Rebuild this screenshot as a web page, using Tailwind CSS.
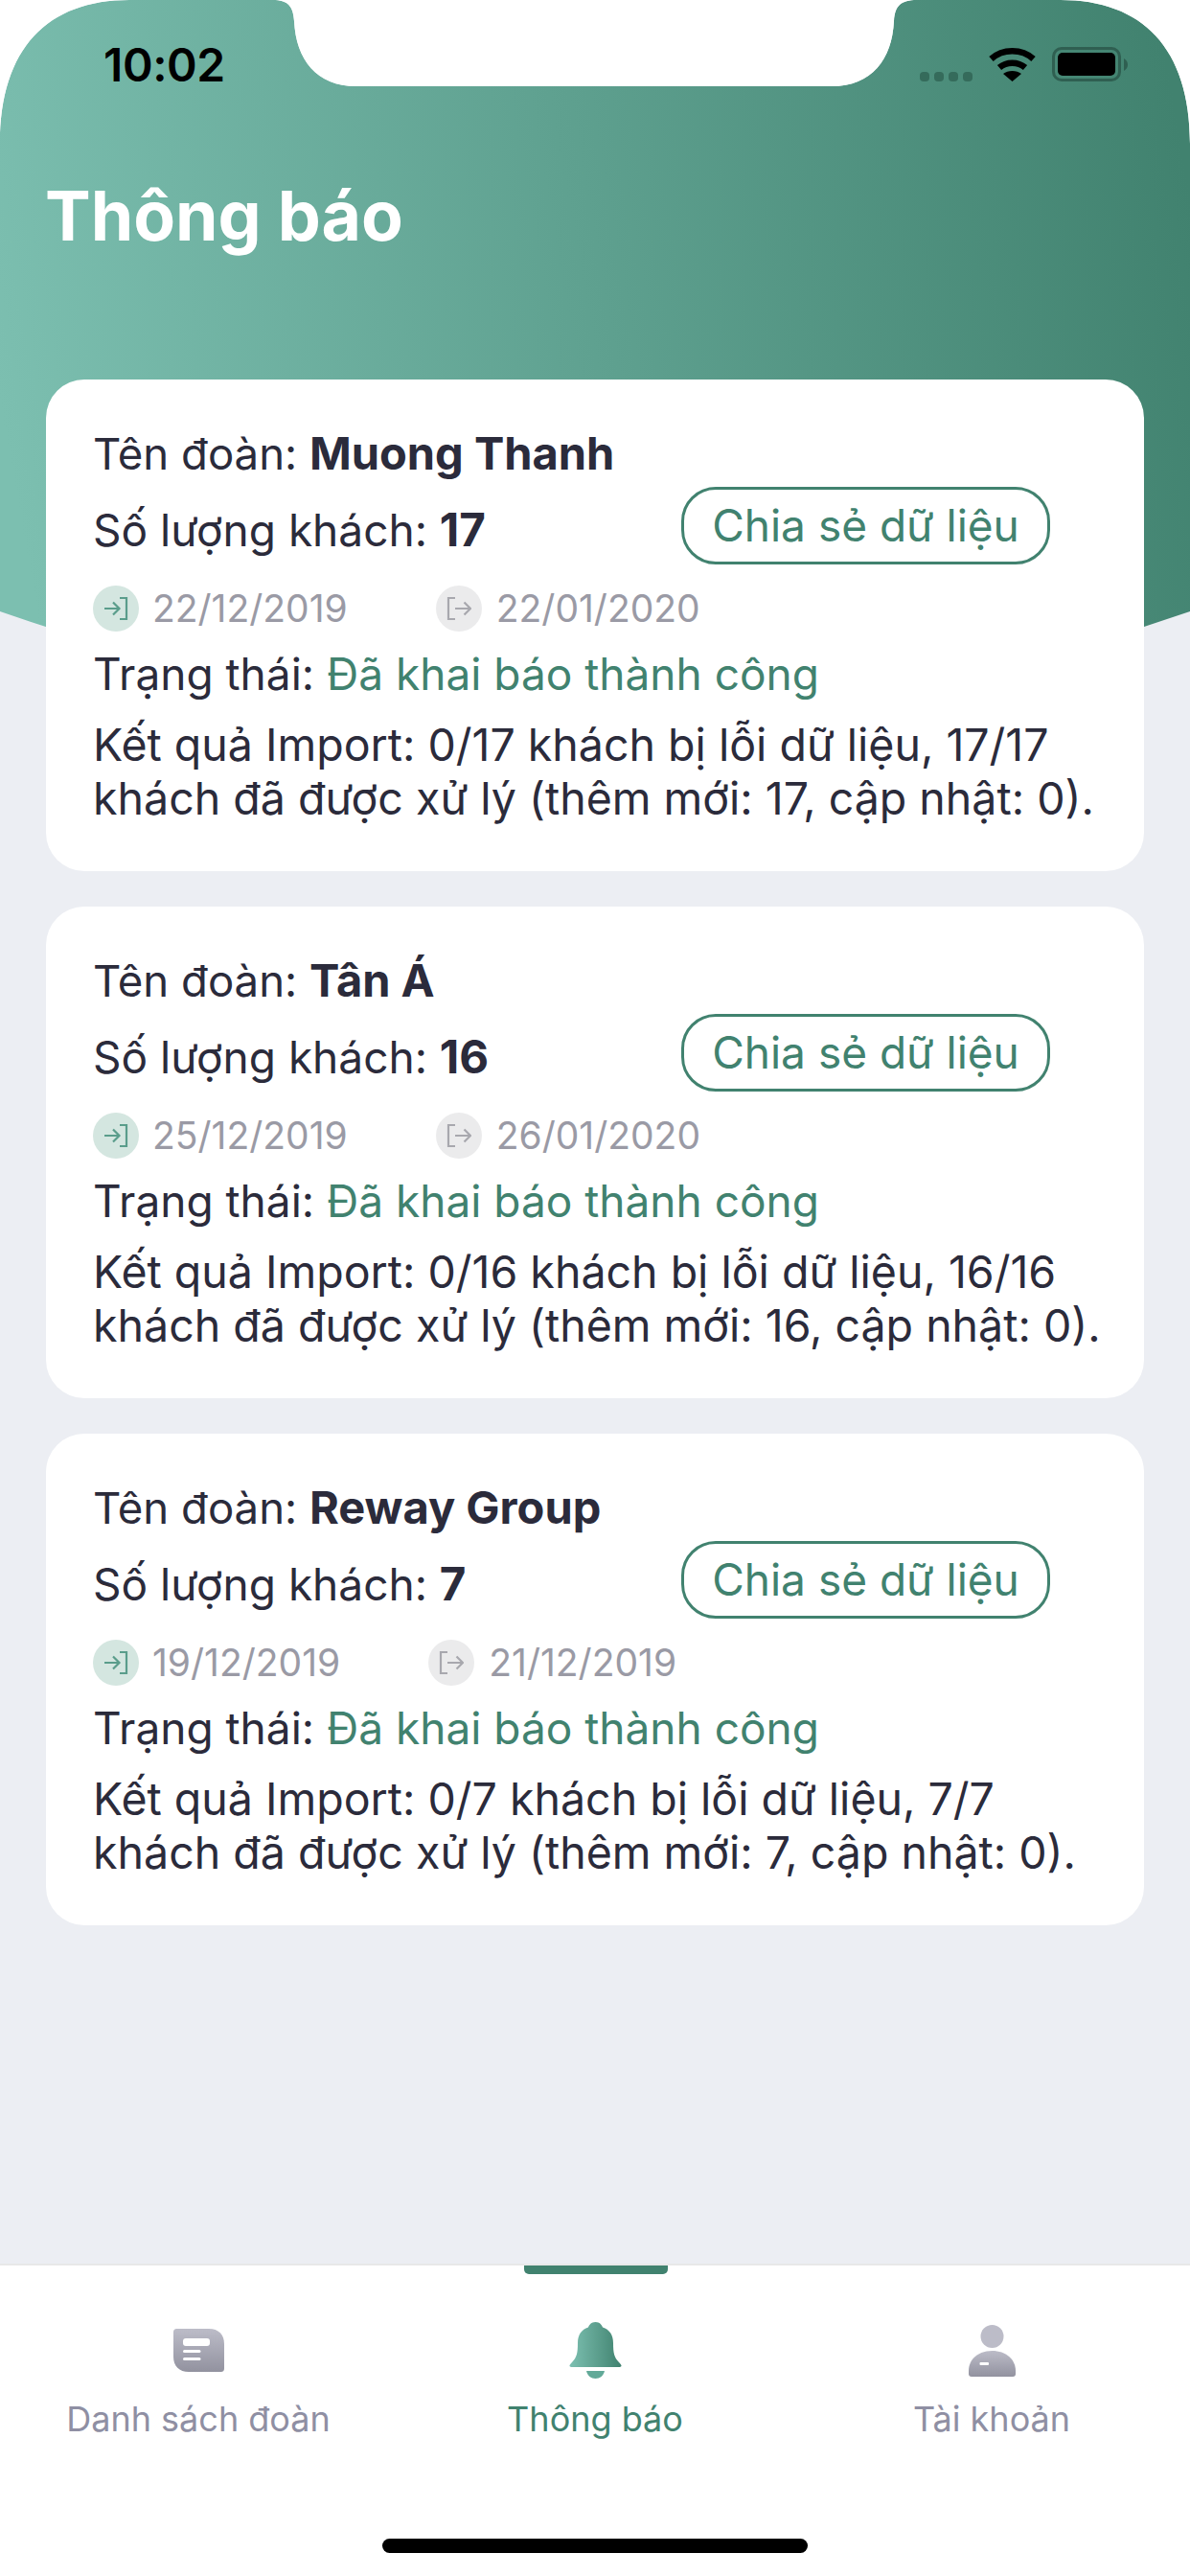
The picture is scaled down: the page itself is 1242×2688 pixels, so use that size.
<!DOCTYPE html>
<html lang="vi">
<head>
<meta charset="utf-8">
<title>Thông báo</title>
<script src="https://cdn.jsdelivr.net/npm/@tailwindcss/browser@4"></script>
</head>
<body class="m-0 bg-white">
<div class="relative w-[1242px] h-[2688px] overflow-hidden flex flex-col bg-[#eceef3] font-[Inter,sans-serif] text-[#2b2b3b]">
  <svg class="absolute left-0 top-0" width="1242" height="800" viewBox="0 0 1242 800" fill="none">
    <defs>
      <linearGradient id="hdr" gradientUnits="userSpaceOnUse" x1="0" y1="420" x2="1242" y2="200">
        <stop offset="0" stop-color="#7cbfb0"/>
        <stop offset="1" stop-color="#41826f"/>
      </linearGradient>
      <linearGradient id="tabg" x1="0" y1="0" x2="0" y2="1">
        <stop offset="0" stop-color="#bcbcc8"/>
        <stop offset="1" stop-color="#92929f"/>
      </linearGradient>
      <linearGradient id="bell" x1="0" y1="0" x2="1" y2="0">
        <stop offset="0" stop-color="#7dc0b1"/>
        <stop offset="1" stop-color="#40826f"/>
      </linearGradient>
    </defs>
    <rect width="1242" height="800" fill="#eceef3"/>
    <path d="M0 638 V150 C0 50 50 0 135 0 H285 C300 0 306 6 307 22 C309 62 330 90 372 90 H868 C910 90 931 62 933 22 C934 6 940 0 957 0 H1107 C1192 0 1242 50 1242 150 V638 Q621 855 0 638 Z" fill="url(#hdr)"/>
    <path d="M0 0 H135 C50 0 0 50 0 150 Z M1242 0 H1107 C1192 0 1242 50 1242 150 Z M285 0 C300 0 306 6 307 22 C309 62 330 90 372 90 H868 C910 90 931 62 933 22 C934 6 940 0 957 0 Z" fill="#ffffff"/>
  </svg>

  <main class="relative flex-1 min-h-0">
    <div class="flex justify-between items-start pt-[40px] pl-[108px] pr-[65px] h-[96px]">
      <span class="text-[48px] leading-[56px] font-semibold text-black tracking-[-0.4px]">10:02</span>
      <div class="flex items-end gap-[17px] mt-[9px]">
        <div class="flex gap-[5px]">
          <span class="w-[10px] h-[10px] rounded-[4px] bg-[#356b5b]"></span>
          <span class="w-[10px] h-[10px] rounded-[4px] bg-[#356b5b]"></span>
          <span class="w-[10px] h-[10px] rounded-[4px] bg-[#356b5b]"></span>
          <span class="w-[10px] h-[10px] rounded-[4px] bg-[#356b5b]"></span>
        </div>
        <svg width="49" height="36" viewBox="0 0 49 36" fill="none">
          <path d="M2.5 12.5 C14.5 1.5 34.5 1.5 46.5 12.5" stroke="#000" stroke-width="6.5"/>
          <path d="M11 21.5 C18.5 15 30.5 15 38 21.5" stroke="#000" stroke-width="6.5"/>
          <path d="M24.5 36 L15 28 C20 24 29 24 34 28 Z" fill="#000"/>
        </svg>
        <div class="flex items-center gap-[3px]">
          <div class="w-[72px] h-[36px] rounded-[10px] border-[3px] border-[#2f5f51] p-[3px]">
            <div class="w-full h-full rounded-[5px] bg-black"></div>
          </div>
          <svg width="4" height="13" viewBox="0 0 4 13"><path d="M0 0 C3 2 4 4 4 6.5 C4 9 3 11 0 13 Z" fill="#2f5f51"/></svg>
        </div>
      </div>
    </div>

    <h1 class="mt-[86px] ml-[47px] text-[71.5px] leading-[87px] font-bold text-white">Thông báo</h1>

    <div class="mt-[127px] mx-[48px] flex flex-col gap-[37px]">

      <article class="h-[513px] rounded-[40px] bg-white pt-[49px] pl-[49px] pr-[24px] text-[46.5px] leading-[55px]">
        <p class="text-[45.5px]">Tên đoàn: <b class="font-bold text-[47px]">Muong Thanh</b></p>
        <div class="mt-[7px] flex items-center justify-between pr-[74px]">
          <p class="pt-[8px] text-[46px]">Số lượng khách: <b class="font-bold text-[47.5px]">17</b></p>
          <button class="w-[385px] h-[81px] rounded-[36px] border-[3px] border-[#41826f] text-[#41826f] text-[46px]">Chia sẻ dữ liệu</button>
        </div>
        <div class="mt-[22px] flex items-center text-[39px] leading-[48px] text-[#9a9aa5]">
          <span class="w-[48px] h-[48px] rounded-full bg-[#d4e6e0] flex items-center justify-center">
            <svg width="26" height="26" viewBox="0 0 26 26" fill="none" stroke="#5a9d8b" stroke-width="2.2"><path d="M1 13 H16 M10 6.5 L16.5 13 L10 19.5"/><path d="M17 2 H24 V24 H17"/></svg>
          </span>
          <span class="ml-[14px]">22/12/2019</span>
          <span class="ml-[92px] w-[48px] h-[48px] rounded-full bg-[#ebebec] flex items-center justify-center">
            <svg width="26" height="26" viewBox="0 0 26 26" fill="none" stroke="#a8a8ae" stroke-width="2.2"><path d="M9 2 H2 V24 H9"/><path d="M9 13 H25 M18.5 6.5 L25 13 L18.5 19.5"/></svg>
          </span>
          <span class="ml-[15px]">22/01/2020</span>
        </div>
        <p class="mt-[17px] text-[46px]">Trạng thái: <span class="text-[#41826f]">Đã khai báo thành công</span></p>
        <p class="mt-[18px] leading-[56px]">Kết quả Import: 0/17 khách bị lỗi dữ liệu, 17/17 khách đã được xử lý (thêm mới: 17, cập nhật: 0).</p>
      </article>

      <article class="h-[513px] rounded-[40px] bg-white pt-[49px] pl-[49px] pr-[24px] text-[46.5px] leading-[55px]">
        <p class="text-[45.5px]">Tên đoàn: <b class="font-bold text-[47px]">Tân Á</b></p>
        <div class="mt-[7px] flex items-center justify-between pr-[74px]">
          <p class="pt-[8px] text-[46px]">Số lượng khách: <b class="font-bold text-[47.5px]">16</b></p>
          <button class="w-[385px] h-[81px] rounded-[36px] border-[3px] border-[#41826f] text-[#41826f] text-[46px]">Chia sẻ dữ liệu</button>
        </div>
        <div class="mt-[22px] flex items-center text-[39px] leading-[48px] text-[#9a9aa5]">
          <span class="w-[48px] h-[48px] rounded-full bg-[#d4e6e0] flex items-center justify-center">
            <svg width="26" height="26" viewBox="0 0 26 26" fill="none" stroke="#5a9d8b" stroke-width="2.2"><path d="M1 13 H16 M10 6.5 L16.5 13 L10 19.5"/><path d="M17 2 H24 V24 H17"/></svg>
          </span>
          <span class="ml-[14px]">25/12/2019</span>
          <span class="ml-[92px] w-[48px] h-[48px] rounded-full bg-[#ebebec] flex items-center justify-center">
            <svg width="26" height="26" viewBox="0 0 26 26" fill="none" stroke="#a8a8ae" stroke-width="2.2"><path d="M9 2 H2 V24 H9"/><path d="M9 13 H25 M18.5 6.5 L25 13 L18.5 19.5"/></svg>
          </span>
          <span class="ml-[15px]">26/01/2020</span>
        </div>
        <p class="mt-[17px] text-[46px]">Trạng thái: <span class="text-[#41826f]">Đã khai báo thành công</span></p>
        <p class="mt-[18px] leading-[56px]">Kết quả Import: 0/16 khách bị lỗi dữ liệu, 16/16 khách đã được xử lý (thêm mới: 16, cập nhật: 0).</p>
      </article>

      <article class="h-[513px] rounded-[40px] bg-white pt-[49px] pl-[49px] pr-[24px] text-[46.5px] leading-[55px]">
        <p class="text-[45.5px]">Tên đoàn: <b class="font-bold text-[47px]">Reway Group</b></p>
        <div class="mt-[7px] flex items-center justify-between pr-[74px]">
          <p class="pt-[8px] text-[46px]">Số lượng khách: <b class="font-bold text-[47.5px]">7</b></p>
          <button class="w-[385px] h-[81px] rounded-[36px] border-[3px] border-[#41826f] text-[#41826f] text-[46px]">Chia sẻ dữ liệu</button>
        </div>
        <div class="mt-[22px] flex items-center text-[39px] leading-[48px] text-[#9a9aa5]">
          <span class="w-[48px] h-[48px] rounded-full bg-[#d4e6e0] flex items-center justify-center">
            <svg width="26" height="26" viewBox="0 0 26 26" fill="none" stroke="#5a9d8b" stroke-width="2.2"><path d="M1 13 H16 M10 6.5 L16.5 13 L10 19.5"/><path d="M17 2 H24 V24 H17"/></svg>
          </span>
          <span class="ml-[14px]">19/12/2019</span>
          <span class="ml-[92px] w-[48px] h-[48px] rounded-full bg-[#ebebec] flex items-center justify-center">
            <svg width="26" height="26" viewBox="0 0 26 26" fill="none" stroke="#a8a8ae" stroke-width="2.2"><path d="M9 2 H2 V24 H9"/><path d="M9 13 H25 M18.5 6.5 L25 13 L18.5 19.5"/></svg>
          </span>
          <span class="ml-[15px]">21/12/2019</span>
        </div>
        <p class="mt-[17px] text-[46px]">Trạng thái: <span class="text-[#41826f]">Đã khai báo thành công</span></p>
        <p class="mt-[18px] leading-[56px]">Kết quả Import: 0/7 khách bị lỗi dữ liệu, 7/7 khách đã được xử lý (thêm mới: 7, cập nhật: 0).</p>
      </article>
    </div>
  </main>

  <nav class="relative h-[326px] shrink-0 bg-white border-t-2 border-[#e8e8e8] grid grid-cols-3 text-[36px] leading-[44px] text-[#8f8fa3]">
    <span class="absolute left-[547px] top-0 w-[150px] h-[9px] rounded-b-[5px] bg-[#41826f]"></span>
    <div class="flex flex-col items-center">
      <div class="h-[59px] mt-[59px] flex items-center">
        <svg width="53" height="45" viewBox="0 0 53 45"><path d="M4 0 H37 C47 0 53 6 53 16 V41 C53 44 52 45 49 45 H16 C6 45 0 39 0 29 V4 C0 1 1 0 4 0 Z" fill="url(#tabg)"/><rect x="10" y="10" width="28" height="8" rx="3" fill="#fff"/><rect x="10" y="22" width="18.5" height="3" rx="1.5" fill="#fff"/><rect x="10" y="30" width="18.5" height="3" rx="1.5" fill="#fff"/></svg>
      </div>
      <span class="mt-[20px]">Danh sách đoàn</span>
    </div>
    <div class="flex flex-col items-center text-[#41826f]">
      <div class="h-[59px] mt-[59px] flex items-center">
        <svg width="55" height="59" viewBox="0 0 55 59"><path d="M27.5 0 C32 0 34 3 35 5.5 C42 8 46 13 46 22 C46 32 47 37 52 42 C56 46 55 47 51 47 H4 C0 47 -1 46 3 42 C8 37 9 32 9 22 C9 13 13 8 20 5.5 C21 3 23 0 27.5 0 Z" fill="url(#bell)"/><path d="M18 51 H37 C36 56 32 59 27.5 59 C23 59 19 56 18 51 Z" fill="#62a998"/></svg>
      </div>
      <span class="mt-[20px]">Thông báo</span>
    </div>
    <div class="flex flex-col items-center">
      <div class="h-[59px] mt-[59px] flex items-center">
        <svg width="49" height="54" viewBox="0 0 49 54"><circle cx="24.5" cy="12" r="12" fill="#bcbcc8"/><path d="M0 48 C0 36 10 27 24.5 27 C39 27 49 36 49 48 V51 C49 53 48 54 46 54 H3 C1 54 0 53 0 51 Z" fill="url(#tabg)"/><rect x="11.5" y="39" width="9.5" height="3" rx="1" fill="#fff"/></svg>
      </div>
      <span class="mt-[20px]">Tài khoản</span>
    </div>
    <span class="absolute left-[399px] top-[285px] w-[444px] h-[15px] rounded-full bg-black"></span>
  </nav>
</div>
</body>
</html>
